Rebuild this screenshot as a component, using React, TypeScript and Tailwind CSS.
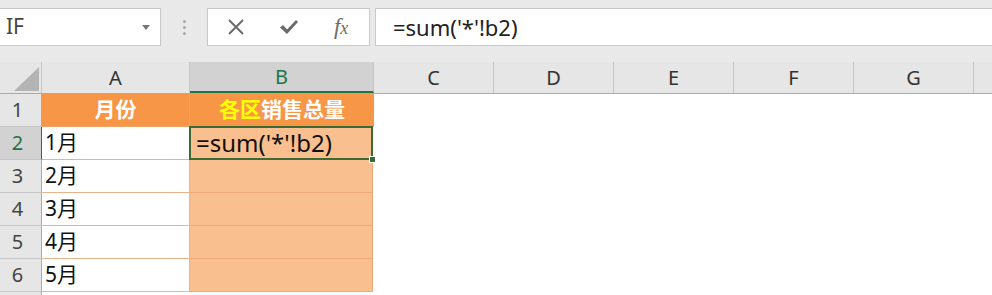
import React from 'react';

const cjk = { fontFamily: '"Noto Sans", "Noto Sans CJK SC", sans-serif' };

const otherCols = ['C', 'D', 'E', 'F', 'G', ''];
const months = ['1月', '2月', '3月', '4月', '5月'];

function RowHead({ n, active }: { n?: number; active?: boolean }) {
  return (
    <div
      className={
        'w-[42px] shrink-0 flex items-center justify-center pr-[6px] text-[20px] border-r border-b ' +
        (active
          ? 'bg-[#d2d2d2] text-[#217346] border-r-[#217346] border-b-[#c6c6c6]'
          : 'bg-[#e6e6e6] text-[#444] border-r-[#ababab] border-b-[#c6c6c6]')
      }
    >
      {n}
    </div>
  );
}

export default function App() {
  return (
    <div className="w-[992px] h-[295px] overflow-hidden bg-white select-none" style={cjk}>
      {/* formula bar */}
      <div className="h-[62px] bg-[#e9e9e9] flex items-start pt-[8px]">
        <div className="w-[161px] h-[38px] bg-white border border-[#c8c8c8] border-l-0 flex items-center justify-between pl-[6px] pr-[10px]">
          <span className="text-[21px] text-[#444]">IF</span>
          <svg width="8" height="5" viewBox="0 0 8 5">
            <path d="M0 0h8L4 5z" fill="#777" />
          </svg>
        </div>
        <div className="w-[46px] h-[38px] flex flex-col items-center justify-center gap-[3px]">
          <span className="w-[3px] h-[3px] rounded-full bg-[#a8a8a8]" />
          <span className="w-[3px] h-[3px] rounded-full bg-[#a8a8a8]" />
          <span className="w-[3px] h-[3px] rounded-full bg-[#a8a8a8]" />
        </div>
        <div className="w-[163px] h-[38px] bg-white border border-[#c8c8c8] flex items-center">
          <div className="w-[56px] flex justify-center">
            <svg width="18" height="18" viewBox="0 0 18 18">
              <path d="M2 2L16 16M16 2L2 16" stroke="#6b6b6b" strokeWidth="2" />
            </svg>
          </div>
          <div className="w-[50px] flex justify-center">
            <svg width="20" height="16" viewBox="0 0 20 16">
              <path d="M1 8.5l3-2.5 4 4.5L17 1l2 2L8 15z" fill="#6b6b6b" />
            </svg>
          </div>
          <div className="w-[56px] flex justify-center">
            <span className="text-[23px] italic text-[#6b6b6b]" style={{ fontFamily: '"Liberation Serif", serif' }}>
              f<span className="text-[18px]">x</span>
            </span>
          </div>
        </div>
        <div className="ml-[5px] flex-1 h-[38px] bg-white border border-[#c8c8c8] border-r-0 flex items-center pl-[17px]">
          <span className="text-[22px] text-[#222]">=sum('*'!b2)</span>
        </div>
      </div>

      {/* column headers */}
      <div className="flex h-[32px] bg-[#e6e6e6] border-b border-[#ababab]">
        <div className="w-[42px] shrink-0 relative border-r border-[#c6c6c6]">
          <svg className="absolute left-[14px] top-[5px]" width="25" height="24" viewBox="0 0 25 24">
            <path d="M25 0V24H0z" fill="#b4b4b4" />
          </svg>
        </div>
        <div className="w-[148px] shrink-0 flex items-center justify-center text-[20px] text-[#333] border-r border-[#c6c6c6]">A</div>
        <div className="w-[184px] shrink-0 flex items-center justify-center text-[20px] text-[#217346] bg-[#d2d2d2] border-r border-[#c6c6c6] border-b-2 border-b-[#217346]">
          B
        </div>
        {otherCols.map((c, i) => (
          <div key={i} className="w-[120px] shrink-0 flex items-center justify-center text-[20px] text-[#333] border-r border-[#c6c6c6]">
            {c}
          </div>
        ))}
      </div>

      {/* row 1 */}
      <div className="flex h-[33px]">
        <RowHead n={1} />
        <div className="w-[148px] shrink-0 bg-[#f79646] border-r border-b border-[#f0a468] flex items-center justify-center text-[21px] font-bold text-white">
          月份
        </div>
        <div className="w-[184px] shrink-0 bg-[#f79646] border-b border-[#f0a468] flex items-center justify-center text-[21px] font-bold text-white">
          <span className="text-[#ffff00]">各区</span>销售总量
        </div>
      </div>

      {/* data rows */}
      {months.map((m, i) => (
        <div key={m} className="flex h-[33px]">
          <RowHead n={i + 2} active={i === 0} />
          <div className="w-[148px] shrink-0 bg-white border-r border-b border-[#e9b48c] flex items-center pl-[3px] text-[21px] text-[#111]">
            {m}
          </div>
          {i === 0 ? (
            <div className="w-[184px] shrink-0 relative bg-[#fabf8f] border-2 border-[#3b6a34] -mt-px -ml-px flex items-center pl-[5px] text-[24px] text-[#111]">
              =sum('*'!b2)
              <span className="absolute right-[-5px] bottom-[-5px] w-[7px] h-[7px] bg-[#3b6a34] border border-white" />
            </div>
          ) : (
            <div className="w-[183px] shrink-0 bg-[#fabf8f] border-b border-r border-[#efa978]" />
          )}
        </div>
      ))}

      {/* row 7 (partial) */}
      <div className="flex h-[33px]">
        <RowHead />
      </div>
    </div>
  );
}
